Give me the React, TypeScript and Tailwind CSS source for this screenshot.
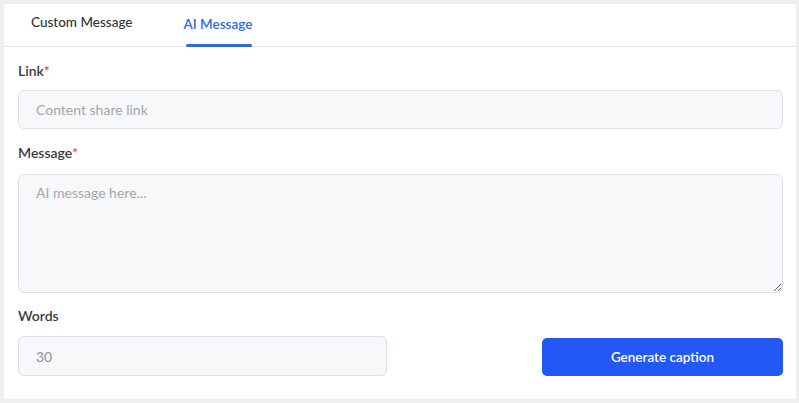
export default function App() {
  return (
    <div className="min-h-screen bg-[#efefef] pt-[4px] pl-[4px] pr-[3px] pb-[4px]" style={{ fontFamily: "Lato, 'Noto Sans', sans-serif" }}>
      <div className="h-[395px] bg-white">
        {/* Tabs */}
        <div className="flex h-[43px] items-end border-b border-[#e3e6ea] pl-[27px]">
          <button className="pb-[14px] text-[13.5px] font-medium text-[#333]">Custom Message</button>
          <button className="relative ml-[51px] pb-[12px] text-[13.5px] font-semibold text-[#2f6ae0]">
            AI Message
            <span className="absolute bottom-[-1px] left-[2px] right-0 h-[3px] rounded-full bg-[#2f6ae0]" />
          </button>
        </div>

        <div className="pl-[14px] pr-[13px]">
          <label className="mt-[13px] block text-[14px] font-semibold text-[#3a3a3a]">
            Link<span className="text-[#e5484d]">*</span>
          </label>
          <input
            className="mt-[9px] h-[39px] w-full rounded-[6px] border border-[#dde1e6] bg-[#f7f8fa] px-[17px] text-[14px] outline-none placeholder:text-[#a3a7ad]"
            placeholder="Content share link"
          />

          <label className="mt-[13px] block text-[14px] font-semibold text-[#3a3a3a]">
            Message<span className="text-[#e5484d]">*</span>
          </label>
          <textarea
            className="mt-[11px] block h-[119px] w-full rounded-[6px] border border-[#dde1e6] bg-[#f7f8fa] px-[17px] py-[7px] text-[14px] outline-none placeholder:text-[#a3a7ad]"
            placeholder="AI message here..."
          />

          <label className="mt-[12px] block text-[14px] font-semibold text-[#3a3a3a]">Words</label>
          <div className="mt-[10px] flex items-center justify-between">
            <input
              className="h-[40px] w-[369px] rounded-[6px] border border-[#dde1e6] bg-[#f7f8fa] px-[17px] text-[14px] text-[#8d9197] outline-none"
              defaultValue="30"
            />
            <button className="mt-[2px] h-[38px] w-[241px] rounded-[5px] bg-[#2358f5] text-[13.5px] font-semibold text-white">
              Generate caption
            </button>
          </div>
        </div>
      </div>
    </div>
  )
}
